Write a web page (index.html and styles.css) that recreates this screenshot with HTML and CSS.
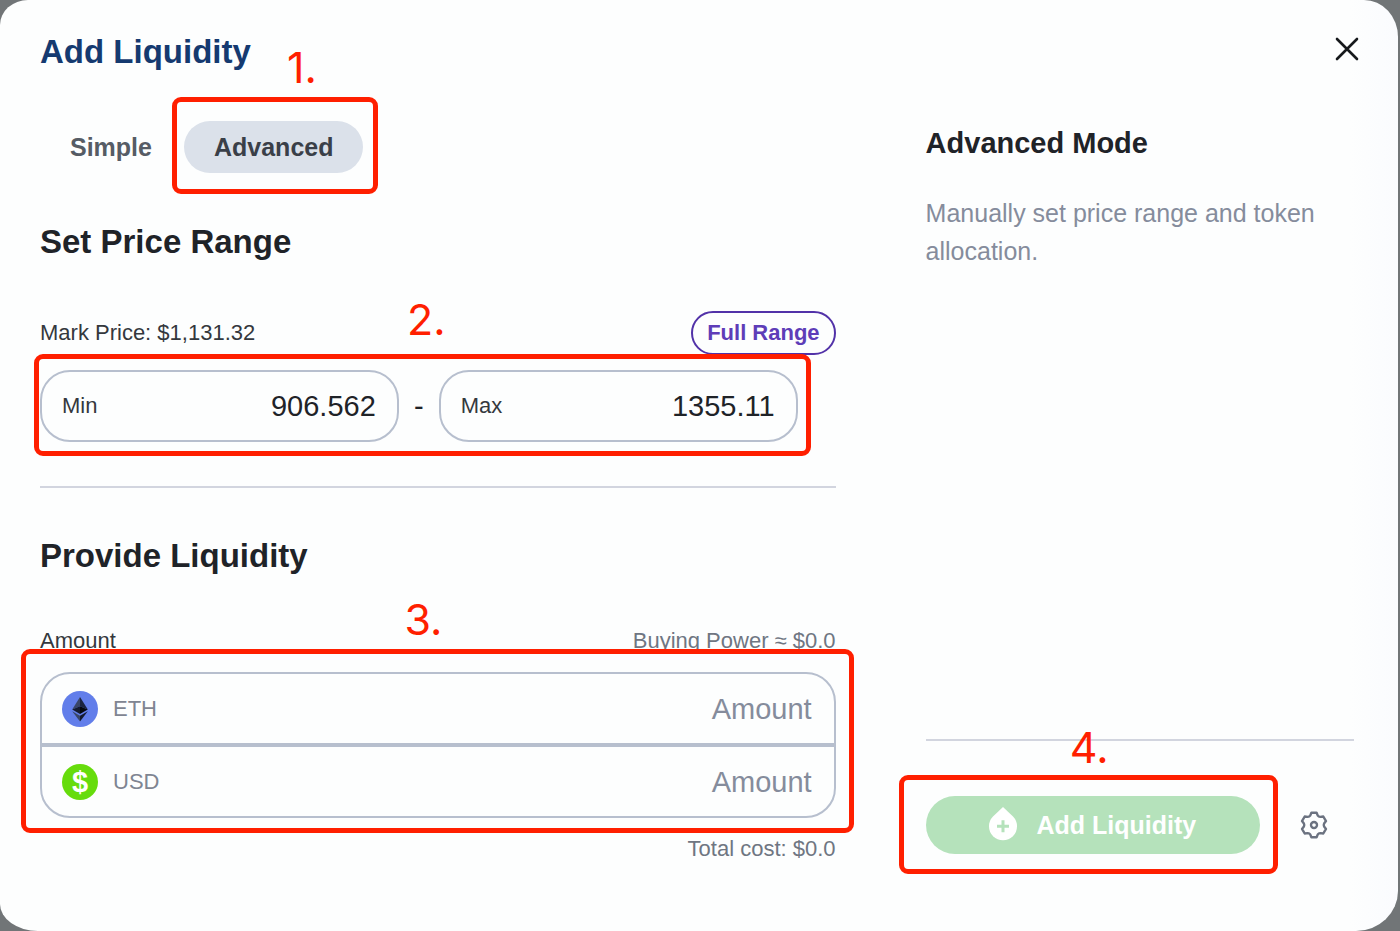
FILE: index.html
```html
<!DOCTYPE html>
<html lang="en">
<head>
  <meta charset="utf-8">
  <title>Add Liquidity</title>
  <link rel="stylesheet" href="styles.css">
</head>
<body>
  <div class="modal" role="dialog" aria-labelledby="modal-title">
    <header class="modal-header">
      <h1 id="modal-title">Add Liquidity</h1>
      <button class="close" type="button" aria-label="Close">
        <svg width="24" height="24" viewBox="0 0 24 24">
          <path d="M2 2L22 22M22 2L2 22" fill="none" stroke="#16191c" stroke-width="2.6" stroke-linecap="round"/>
        </svg>
      </button>
    </header>

    <div class="modal-body">
      <main class="form">
        <div class="tabs">
          <button class="tab" type="button">Simple</button>
          <div class="marked mark-tab">
            <button class="tab active" type="button">Advanced</button>
            <div class="mark"><span class="step">1.</span></div>
          </div>
        </div>

        <h2>Set Price Range</h2>
        <div class="row price-row">
          <span>Mark Price: $1,131.32</span>
          <button class="full-range" type="button">Full Range</button>
        </div>
        <div class="marked mark-price">
          <div class="range">
            <div class="field">
              <label for="min">Min</label>
              <input type="text" id="min" value="906.562">
            </div>
            <span class="dash">-</span>
            <div class="field">
              <label for="max">Max</label>
              <input type="text" id="max" value="1355.11">
            </div>
          </div>
          <div class="mark"><span class="step">2.</span></div>
        </div>

        <hr>

        <h2>Provide Liquidity</h2>
        <div class="row amount-row">
          <span>Amount</span>
          <span class="muted">Buying Power ≈ $0.0</span>
        </div>
        <div class="marked mark-amount">
          <div class="tokens">
            <div class="token">
              <svg width="36" height="36" viewBox="0 0 36 36">
                <circle cx="18" cy="18" r="18" fill="#627eea"/>
                <path d="M18 6L10.2 18.6L18 15.2z" fill="#3a4668"/>
                <path d="M18 6L25.8 18.6L18 15.2z" fill="#1b2440"/>
                <path d="M18 15.2L10.2 18.6L18 23z" fill="#151b30"/>
                <path d="M18 15.2L25.8 18.6L18 23z" fill="#05080f"/>
                <path d="M10.2 20.2L18 24.7V30.5z" fill="#3a4668"/>
                <path d="M25.8 20.2L18 24.7V30.5z" fill="#141a2e"/>
              </svg>
              <label for="eth">ETH</label>
              <input type="text" id="eth" placeholder="Amount">
            </div>
            <div class="token">
              <span class="usd-icon">$</span>
              <label for="usd">USD</label>
              <input type="text" id="usd" placeholder="Amount">
            </div>
          </div>
          <div class="mark"><span class="step">3.</span></div>
        </div>
        <p class="total muted">Total cost: $0.0</p>
      </main>

      <aside class="info">
        <h3>Advanced Mode</h3>
        <p>Manually set price range and token allocation.</p>

        <div class="actions">
          <div class="marked mark-submit">
            <button class="submit" type="button">
              <svg width="28" height="36" viewBox="0 0 28 36">
                <path d="M14 0L24 9.5A14 14 0 1 1 4 9.5z" fill="#fff"/>
                <path d="M14 13.3V25.3M8 19.3H20" stroke="#b5e2bb" stroke-width="3"/>
              </svg>
              Add Liquidity
            </button>
            <div class="mark"><span class="step">4.</span></div>
          </div>
          <button class="settings" type="button" aria-label="Settings">
            <svg width="28" height="28" viewBox="-14 -14 28 28" fill="none" stroke="#6b7280" stroke-width="2.4" stroke-linejoin="round">
              <path d="M-2.6 -12.3H2.6L3.8 -9.4Q4.6 -8.3 6.2 -8.1L9.3 -8.5L12 -3.9L10.1 -1.5Q9.4 0 10.1 1.5L12 3.9L9.3 8.5L6.2 8.1Q4.6 8.3 3.8 9.4L2.6 12.3H-2.6L-3.8 9.4Q-4.6 8.3 -6.2 8.1L-9.3 8.5L-12 3.9L-10.1 1.5Q-9.4 0 -10.1 -1.5L-12 -3.9L-9.3 -8.5L-6.2 -8.1Q-4.6 -8.3 -3.8 -9.4z"/>
              <circle cx="0" cy="0" r="3"/>
            </svg>
          </button>
        </div>
      </aside>
    </div>
  </div>
</body>
</html>
```

FILE: styles.css
```css
* {
  box-sizing: border-box;
}

body {
  margin: 0;
  background: #717577;
  color: #1f2328;
  font-family: "Liberation Sans", Arial, sans-serif;
  font-size: 22px;
  line-height: 26px;
}

h1, h2, h3, p {
  margin: 0;
}

button, input {
  font: inherit;
  color: inherit;
  border: 0;
  padding: 0;
  background: none;
}

button {
  cursor: pointer;
}

svg {
  display: block;
  flex: none;
}

.modal {
  display: flex;
  flex-direction: column;
  min-height: 100vh;
  margin-right: 2px;
  padding: 32px 44px 68px 40px;
  background: linear-gradient(to left, #fafbfe, #fdfefe 48px);
  border-radius: 28px 34px 42px 38px / 25px 37px 40px 27px;
}

.modal-header {
  display: flex;
  justify-content: space-between;
  align-items: center;
}

h1, h2 {
  font-size: 33px;
  line-height: 40px;
}

h1 {
  color: #153a70;
}

.close {
  padding: 0 0 6px;
  margin-right: -5px;
}

.modal-body {
  flex: 1;
  display: grid;
  grid-template-columns: minmax(0, 13fr) minmax(0, 7fr);
  gap: 90px;
}

.tabs {
  display: flex;
  gap: 2px;
  margin: 49px 0;
}

.tab {
  padding: 0 30px;
  border-radius: 26px;
  font-size: 25px;
  font-weight: bold;
  line-height: 52px;
  color: #565c65;
}

.tab.active {
  display: block;
  background: #dbe1ea;
  color: #3a3f48;
}

.row {
  display: flex;
  justify-content: space-between;
  align-items: center;
  color: #34383d;
}

.price-row {
  margin: 49px 0 15px;
}

.full-range {
  padding: 0 14px;
  border: 2px solid #5232a8;
  border-radius: 22px;
  font-weight: bold;
  line-height: 40px;
  color: #5e3db8;
}

.range {
  display: flex;
  align-items: center;
}

.field {
  flex: 1;
  min-width: 0;
  height: 72px;
  display: flex;
  align-items: center;
  padding: 0 21px 0 20px;
  border: 2px solid #b7bfce;
  border-radius: 30px;
}

.field label {
  color: #34383d;
}

.dash {
  width: 40px;
  text-align: center;
  font-size: 29px;
}

.field input, .token input {
  flex: 1;
  min-width: 0;
  font-size: 29px;
  line-height: 36px;
  text-align: right;
}

hr {
  height: 2px;
  margin: 44px 0 48px;
  border: 0;
  background: #d2d5df;
}

.amount-row {
  margin: 52px 0 18px;
}

.muted {
  color: #6f7682;
}

.tokens {
  border: 2px solid #b7bfce;
  border-radius: 30px;
}

.token {
  height: 69px;
  display: flex;
  align-items: center;
  gap: 15px;
  padding: 0 22px 0 20px;
  color: #7f8592;
}

.token + .token {
  height: 73px;
  border-top: 4px solid #b7bfce;
}

.token input::placeholder {
  color: #858c9c;
  opacity: 1;
}

.usd-icon {
  width: 36px;
  height: 36px;
  border-radius: 50%;
  background: #66dc0c;
  color: #fff;
  font-size: 29px;
  font-weight: bold;
  line-height: 36px;
  text-align: center;
}

.total {
  margin-top: 18px;
  text-align: right;
}

.info {
  display: flex;
  flex-direction: column;
  padding: 51px 0 9px;
}

.info h3 {
  font-size: 29px;
  line-height: 40px;
}

.info p {
  margin-top: 31px;
  font-size: 25px;
  line-height: 38px;
  color: #858c9c;
}

.actions {
  display: flex;
  align-items: center;
  gap: 40px;
  margin-top: auto;
  padding-top: 55px;
  border-top: 2px solid #d2d5df;
}

.actions .marked {
  flex: 1;
}

.submit {
  width: 100%;
  height: 58px;
  display: flex;
  justify-content: center;
  align-items: center;
  gap: 19px;
  border-radius: 29px;
  background: #b5e2bb;
  color: #fff;
  font-size: 25px;
  font-weight: bold;
}

.settings {
  margin-right: 26px;
}

/* red step boxes drawn over the form */
.marked {
  position: relative;
}

.mark {
  position: absolute;
  border: 5px solid #ff1f00;
  border-radius: 9px;
  pointer-events: none;
}

.step {
  position: absolute;
  bottom: 100%;
  margin-bottom: 13px;
  color: #ff1f00;
  font-family: Inter, sans-serif;
  font-size: 43px;
  line-height: 44px;
}

.mark-tab .mark {
  inset: -24px -15px -21px -12px;
}

.mark-tab .step {
  left: 56%;
}

.mark-price {
  margin-right: 38px;
}

.mark-price .mark {
  inset: -16px -13px -14px -6px;
}

.mark-price .step {
  left: 48%;
  margin-bottom: 18px;
}

.mark-amount .mark {
  inset: -23px -18px -15px -19px;
}

.mark-amount .step {
  left: 46%;
}

.mark-submit .mark {
  inset: -21px -18px -20px -27px;
}

.mark-submit .step {
  left: 45%;
  margin-bottom: 11px;
}
```
